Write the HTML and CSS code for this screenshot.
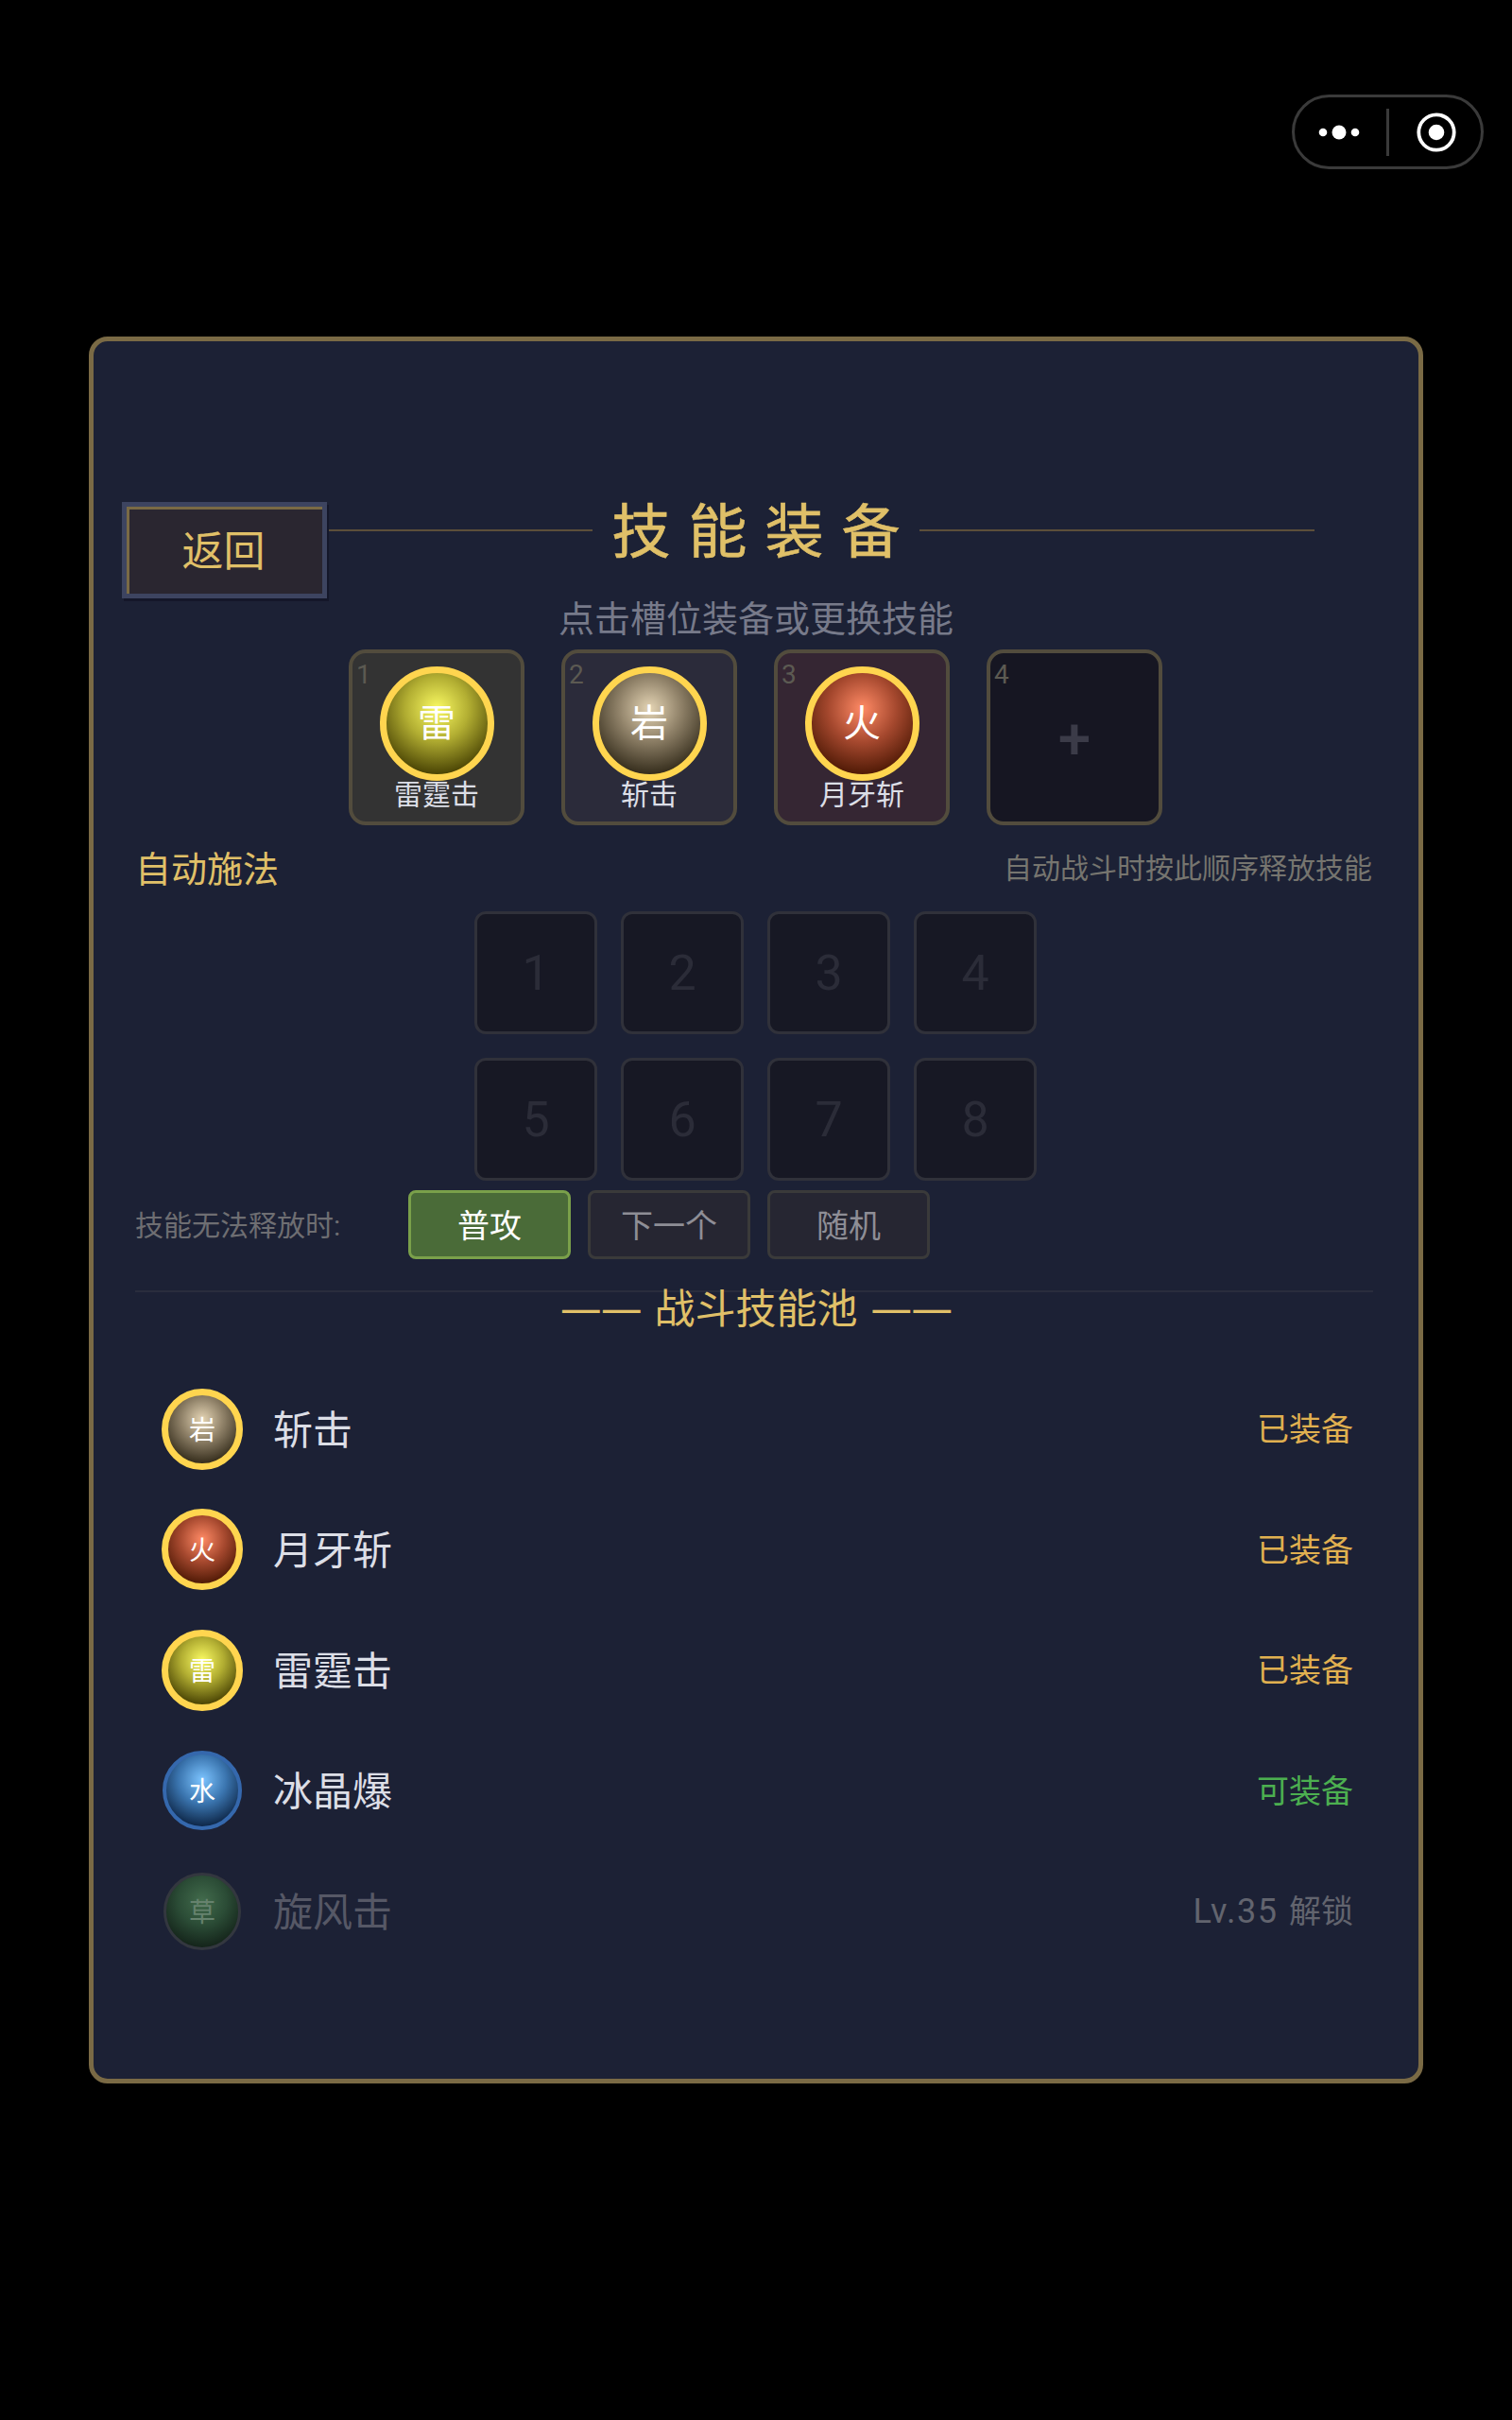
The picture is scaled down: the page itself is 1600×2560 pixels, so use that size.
FILE: index.html
```html
<!DOCTYPE html>
<html lang="zh-CN">
<head>
	<meta charset="UTF-8">
	<title>技能装备</title>
	<link rel="stylesheet" href="styles.css">
</head>
<body>
<div class="capsule">
	<svg class="capsule-dots" width="46" height="16" viewBox="0 0 46 16"><circle cx="6" cy="8" r="4.3" fill="#fff"/><circle cx="23" cy="8" r="7.5" fill="#fff"/><circle cx="40" cy="8" r="4.3" fill="#fff"/></svg>
	<i class="capsule-line"></i>
	<svg class="capsule-target" width="44" height="44" viewBox="0 0 44 44"><circle cx="22" cy="22" r="18.7" fill="none" stroke="#fff" stroke-width="3.8"/><circle cx="22" cy="22" r="8.3" fill="#fff"/></svg>
</div>

<div class="panel">
	<div class="header">
		<div class="back">返回</div>
		<i class="title-line title-line-left"></i>
		<h1 class="title">技能装备</h1>
		<i class="title-line title-line-right"></i>
	</div>
	<div class="hint">点击槽位装备或更换技能</div>

	<div class="slots">
		<div class="slot slot-thunder">
			<span class="slot-num">1</span>
			<div class="orb orb-big orb-thunder">雷</div>
			<div class="slot-name">雷霆击</div>
		</div>
		<div class="slot slot-rock">
			<span class="slot-num">2</span>
			<div class="orb orb-big orb-rock">岩</div>
			<div class="slot-name">斩击</div>
		</div>
		<div class="slot slot-fire">
			<span class="slot-num">3</span>
			<div class="orb orb-big orb-fire">火</div>
			<div class="slot-name">月牙斩</div>
		</div>
		<div class="slot slot-empty">
			<span class="slot-num">4</span>
			<div class="slot-plus">+</div>
		</div>
	</div>

	<div class="auto-head">
		<span class="auto-title">自动施法</span>
		<span class="auto-tip">自动战斗时按此顺序释放技能</span>
	</div>
	<div class="queue">
		<div class="cell">1</div>
		<div class="cell">2</div>
		<div class="cell">3</div>
		<div class="cell">4</div>
		<div class="cell">5</div>
		<div class="cell">6</div>
		<div class="cell">7</div>
		<div class="cell">8</div>
	</div>

	<div class="fallback">
		<span class="fallback-label">技能无法释放时:</span>
		<div class="opt opt-on">普攻</div>
		<div class="opt">下一个</div>
		<div class="opt">随机</div>
	</div>

	<div class="divider"></div>
	<div class="pool-title"><span class="dash">——</span> 战斗技能池 <span class="dash">——</span></div>

	<div class="pool">
		<div class="row">
			<div class="orb orb-small orb-rock">岩</div>
			<div class="row-name">斩击</div>
			<div class="row-state state-on">已装备</div>
		</div>
		<div class="row">
			<div class="orb orb-small orb-fire">火</div>
			<div class="row-name">月牙斩</div>
			<div class="row-state state-on">已装备</div>
		</div>
		<div class="row">
			<div class="orb orb-small orb-thunder">雷</div>
			<div class="row-name">雷霆击</div>
			<div class="row-state state-on">已装备</div>
		</div>
		<div class="row">
			<div class="orb orb-small orb-ice">水</div>
			<div class="row-name">冰晶爆</div>
			<div class="row-state state-can">可装备</div>
		</div>
		<div class="row row-locked">
			<div class="orb orb-small orb-grass">草</div>
			<div class="row-name">旋风击</div>
			<div class="row-state state-lock"><span class="lv">Lv.35</span> 解锁</div>
		</div>
	</div>
</div>
</body>
</html>
```

FILE: styles.css
```css
* { box-sizing: border-box; margin: 0; padding: 0; }
html, body { width: 1600px; height: 2560px; overflow: hidden; }
body {
	background: #000;
	color: #e4e6ee;
	font-family: Roboto, "Noto Sans CJK SC", sans-serif;
	padding: 356px 0 0 94px;
	position: relative;
}
i { display: block; }

/* top right capsule */
.capsule {
	position: absolute;
	left: 1367px;
	top: 100px;
	width: 203px;
	height: 79px;
	border: 3px solid #3a3a3a;
	border-radius: 40px;
	display: flex;
	align-items: center;
	padding-left: 24px;
}
.capsule-line { width: 3px; height: 50px; background: #3a3a3a; margin-left: 27px; }
.capsule-target { margin-left: 28px; }

.panel {
	width: 1412px;
	height: 1848px;
	background: #1c2135;
	border: 5px solid #7a6a45;
	border-radius: 20px;
	padding: 170px 0 0 30px;
}

.header { display: flex; align-items: flex-start; height: 102px; }
.back {
	width: 217px;
	height: 102px;
	background: #2a2630;
	border: 5px solid #3d4460;
	box-shadow: 2px 3px 0 #14172a, inset 3px 3px 0 #7a6a45;
	color: #e0c068;
	font-size: 44px;
	line-height: 96px;
	text-align: center;
	padding-right: 2px;
	flex: none;
}
.title-line { height: 2px; background: #5c4f3a; margin-top: 29px; flex: none; }
.title-line-left { width: 279px; margin-left: 2px; }
.title-line-right { width: 418px; }
.title {
	width: 346px;
	flex: none;
	text-align: center;
	color: #e0c068;
	font-size: 62px;
	font-weight: 400;
	-webkit-text-stroke: 0.6px #e0c068;
	letter-spacing: 19px;
	line-height: 66px;
	padding-left: 19px;
}

.hint {
	margin: -6px 0 0 -30px;
	text-align: center;
	color: #777a8a;
	font-size: 38px;
	line-height: 56px;
}

.slots { display: flex; gap: 39px; margin: 4px 0 0 240px; }
.slot {
	width: 186px;
	height: 186px;
	border: 4px solid #524c3d;
	border-radius: 18px;
	position: relative;
	display: flex;
	flex-direction: column;
	align-items: center;
	padding-top: 14px;
}
.slot-thunder { background: #333333; }
.slot-rock { background: #2b2b3a; }
.slot-fire { background: #352633; }
.slot-empty { background: #161622; justify-content: center; padding-top: 2px; }
.slot-num {
	position: absolute;
	left: 4px;
	top: 3px;
	color: #5c5a52;
	font-size: 28px;
	line-height: 40px;
}
.slot-name { font-size: 30px; line-height: 36px; margin-top: -3px; color: #dcdee6; }
.slot-plus { color: #3b3b48; font-size: 62px; font-weight: 500; line-height: 60px; }

/* skill orbs */
.orb {
	border-radius: 50%;
	display: flex;
	align-items: center;
	justify-content: center;
	color: #fff;
	flex: none;
}
.orb-big { width: 121px; height: 121px; border: 7px solid #ffd54f; font-size: 40px; padding-bottom: 8px; }
.orb-small { width: 86px; height: 86px; border: 7px solid #ffd54f; font-size: 28px; padding-bottom: 2px; }
.orb-thunder { background: radial-gradient(circle farthest-side at 50% 35%, #fafa62 0%, #b2ae32 48%, #4a4404 100%); }
.orb-rock { background: radial-gradient(circle farthest-side at 50% 35%, #e4d4b4 0%, #8f8168 48%, #352d1c 100%); }
.orb-fire { background: radial-gradient(circle farthest-side at 50% 35%, #ff8a65 0%, #a5482e 52%, #501a06 100%); }
.orb-ice { background: radial-gradient(circle farthest-side at 50% 35%, #7cc4ff 0%, #3a74ae 52%, #0e2748 100%); border: 4px solid #3568ad; width: 84px; height: 84px; margin: 0 1px; }
.orb-grass { background: radial-gradient(circle farthest-side at 50% 35%, #426b4c 0%, #2b4c36 52%, #14241a 100%); border: 3px solid #33373f; color: #66826e; width: 82px; height: 82px; margin: 0 2px; }

.auto-head {
	display: flex;
	justify-content: space-between;
	align-items: center;
	margin: 15px 0 0 14px;
	padding-right: 49px;
	height: 56px;
}
.auto-title { color: #e0c068; font-size: 38px; }
.auto-tip { color: #76756f; font-size: 30px; }

.queue {
	display: grid;
	grid-template-columns: repeat(4, 130px);
	gap: 25px;
	margin: 20px 0 0 373px;
}
.cell {
	height: 130px;
	background: #171824;
	border: 3px solid #30313a;
	border-radius: 12px;
	display: flex;
	align-items: center;
	justify-content: center;
	color: #2b2c38;
	font-size: 52px;
}

.fallback { display: flex; align-items: center; margin: 10px 0 0 14px; }
.fallback-label { color: #6e6e72; font-size: 30px; width: 289px; padding-bottom: 3px; }
.opt {
	width: 172px;
	height: 73px;
	margin-right: 18px;
	background: #262632;
	border: 3px solid #3a3a3a;
	border-radius: 8px;
	color: #8e8e96;
	font-size: 34px;
	padding-bottom: 3px;
	display: flex;
	align-items: center;
	justify-content: center;
}
.opt-on { background: #4a6b38; border-color: #7aa04a; color: #fff; }

.divider { height: 2px; background: #2a2d3d; margin: 33px 0 0 14px; width: 1310px; }
.pool-title {
	margin: -2px 0 0 -30px;
	text-align: center;
	color: #e0c068;
	font-family: "DejaVu Sans", "Noto Sans CJK SC", sans-serif;
	font-size: 43px;
	line-height: 40px;
}
.dash { font-size: 44px; letter-spacing: -1px; }

.pool { margin: 43px 0 0 42px; padding-right: 69px; }
.row { display: flex; align-items: center; height: 127.5px; }
.row-name { font-size: 42px; margin-left: 32px; flex: 1; color: #dcdee6; padding-bottom: 5px; }
.row-state { font-size: 34px; padding-bottom: 4px; }
.state-on { color: #e0b050; }
.state-can { color: #4caf50; }
.state-lock { color: #62646e; }
.lv { font-size: 36px; letter-spacing: 1.5px; margin-right: 3px; }
.row-locked .row-name { color: #565866; }
```
